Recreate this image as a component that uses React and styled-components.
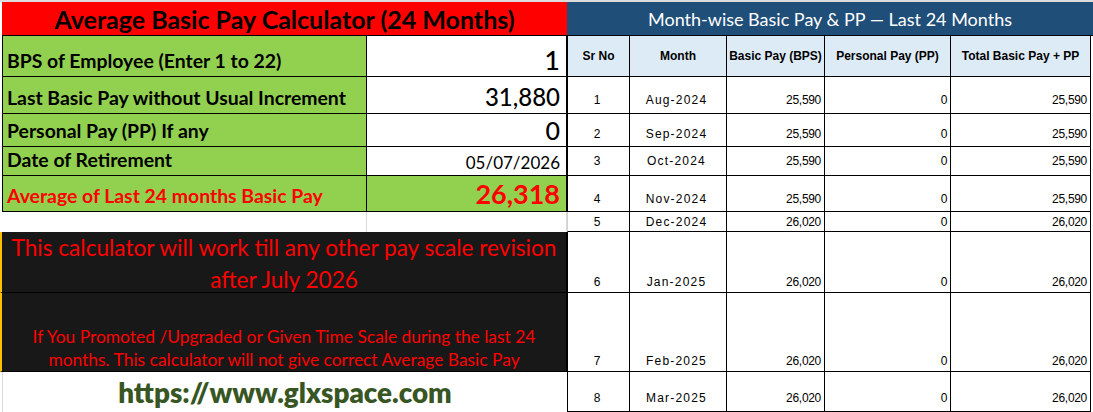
import { Fragment } from 'react';
import styled, { createGlobalStyle } from 'styled-components';

const GlobalStyle = createGlobalStyle`
  body {
    margin: 0;
    background: #fff;
    font-family: Lato, "Liberation Sans", sans-serif;
  }
`;

const Sheet = styled.div`
  display: grid;
  grid-template-columns: 367px 200px 63px 97px 98px 126px 140px;
  grid-template-rows: 34px 41px 37px 33px 29px 36px 20px 61px 79px 40px;
  width: 1093px;
  height: 410px;
  border-top: 2px solid #dcdcdc;
  overflow: hidden;
`;

const Title = styled.div`
  grid-column: span 2;
  margin-left: 2px;
  background: #ff0000;
  border-bottom: 1px solid #000;
  display: flex;
  align-items: center;
  justify-content: center;
  font-weight: 700;
  font-size: 25px;
  color: #000;
`;

const TableTitle = styled.div`
  grid-column: span 5;
  margin-right: -2px;
  background: #1f4e79;
  border-bottom: 1px solid #000;
  display: flex;
  align-items: center;
  justify-content: center;
  font-size: 18px;
  color: #fff;
`;

const Label = styled.div`
  margin-left: 2px;
  background: ${p => (p.$blank ? '#fff' : '#92d050')};
  border-left: 1px solid ${p => (p.$blank ? '#fff' : '#000')};
  border-right: 1px solid ${p => (p.$blank ? '#dadada' : '#000')};
  border-bottom: 1px solid ${p => (p.$blank ? 'transparent' : '#000')};
  display: flex;
  align-items: flex-end;
  padding: 0 0 4px 4px;
  font-weight: 700;
  font-size: 19.4px;
  color: ${p => (p.$red ? '#ff0000' : '#000')};
  white-space: nowrap;
`;

const Value = styled.div`
  background: ${p => (p.$green ? '#92d050' : '#fff')};
  border-right: 1px solid ${p => (p.$blank ? '#dadada' : '#000')};
  border-bottom: 1px solid ${p => (p.$blank ? 'transparent' : '#000')};
  display: flex;
  align-items: flex-end;
  justify-content: flex-end;
  padding: 0 6px ${p => p.$pb}px 0;
  font-size: ${p => p.$size}px;
  font-weight: ${p => p.$weight};
  color: ${p => (p.$green ? '#ff0000' : '#000')};
  line-height: 1;
`;

const Notice = styled.div`
  grid-column: span 2;
  background: #181818;
  border-left: 2px solid #ffc000;
  border-right: 1px solid #000;
  border-bottom: 1px solid #000;
  display: flex;
  flex-direction: column;
  align-items: center;
  justify-content: ${p => (p.$bottom ? 'flex-end' : 'center')};
  padding-top: ${p => (p.$bottom ? 0 : 4)}px;
  color: #ff0000;
  font-size: ${p => p.$size}px;
  line-height: ${p => p.$lh}px;
  text-align: center;
  white-space: nowrap;
`;

const Link = styled.div`
  grid-column: span 2;
  margin-left: 2px;
  border-left: 1px solid #d9d9d9;
  display: flex;
  align-items: center;
  justify-content: center;
  font-weight: 800;
  font-size: 27.8px;
  color: #375623;
`;

const Head = styled.div`
  background: #ddebf7;
  border-right: 1px solid #000;
  border-bottom: 1px solid #000;
  border-left: ${p => (p.$first ? '1px solid #000' : 'none')};
  display: flex;
  align-items: center;
  justify-content: center;
  font-family: "Liberation Sans", sans-serif;
  font-weight: 700;
  font-size: 12px;
  white-space: nowrap;
`;

const Cell = styled.div`
  border-right: 1px solid #000;
  border-bottom: 1px solid #000;
  border-left: ${p => (p.$first ? `1px solid ${p.$soft ? '#d0d0d0' : '#000'}` : 'none')};
  display: flex;
  align-items: flex-end;
  justify-content: ${p => (p.$right ? 'flex-end' : 'center')};
  padding: 0 3px ${p => p.$pb}px 0;
  font-family: "Liberation Sans", sans-serif;
  font-size: 12px;
  letter-spacing: ${p => (p.$spread ? '1.2px' : '-0.3px')};
  color: #000;
  line-height: 1;
`;

const inputs = [
  { label: 'BPS of Employee (Enter 1 to 22)', value: '1', size: 27, weight: 500, pb: 3 },
  { label: 'Last Basic Pay without Usual Increment', value: '31,880', size: 24, weight: 500, pb: 4 },
  { label: 'Personal Pay (PP) If any', value: '0', size: 25, weight: 500, pb: 3 },
  { label: 'Date of Retirement', value: '05/07/2026', size: 17, weight: 400, pb: 4 },
  { label: 'Average of Last 24 months Basic Pay', value: '26,318', size: 27, weight: 700, pb: 4, total: true },
];

const months = [
  { month: 'Aug-2024', pay: '25,590', pb: 7 },
  { month: 'Sep-2024', pay: '25,590', pb: 6 },
  { month: 'Oct-2024', pay: '25,590', pb: 8 },
  { month: 'Nov-2024', pay: '25,590', pb: 6 },
  { month: 'Dec-2024', pay: '26,020', pb: 3, soft: true },
  { month: 'Jan-2025', pay: '26,020', pb: 4 },
  { month: 'Feb-2025', pay: '26,020', pb: 4 },
  { month: 'Mar-2025', pay: '26,020', pb: 7 },
];

const heads = ['Sr No', 'Month', 'Basic Pay (BPS)', 'Personal Pay (PP)', 'Total Basic Pay + PP'];

export default function App() {
  // left side of every sheet row, top to bottom
  const left = [
    ...inputs.map(row => (
      <>
        <Label $red={row.total}>{row.label}</Label>
        <Value $size={row.size} $weight={row.weight} $pb={row.pb} $green={row.total}>
          {row.value}
        </Value>
      </>
    )),
    <>
      <Label $blank />
      <Value $blank $pb={0} />
    </>,
    <Notice $size={22.6} $lh={32}>
      <span>This calculator will work till any other pay scale revision</span>
      <span>after July 2026</span>
    </Notice>,
    <Notice $bottom $size={17.4} $lh={23}>
      <span>If You Promoted /Upgraded or Given Time Scale during the last 24</span>
      <span>months. This calculator will not give correct Average Basic Pay</span>
    </Notice>,
    <Link>https://www.glxspace.com</Link>,
  ];

  const right = [
    heads.map((h, i) => <Head key={h} $first={i === 0}>{h}</Head>),
    ...months.map((m, i) => (
      <>
        <Cell $first $soft={m.soft} $pb={m.pb}>{i + 1}</Cell>
        <Cell $spread $pb={m.pb}>{m.month}</Cell>
        <Cell $right $pb={m.pb}>{m.pay}</Cell>
        <Cell $right $pb={m.pb}>0</Cell>
        <Cell $right $pb={m.pb}>{m.pay}</Cell>
      </>
    )),
  ];

  return (
    <>
      <GlobalStyle />
      <Sheet>
        <Title>Average Basic Pay Calculator (24 Months)</Title>
        <TableTitle>Month-wise Basic Pay &amp; PP — Last 24 Months</TableTitle>
        {left.map((l, i) => (
          <Fragment key={i}>
            {l}
            {right[i]}
          </Fragment>
        ))}
      </Sheet>
    </>
  );
}
